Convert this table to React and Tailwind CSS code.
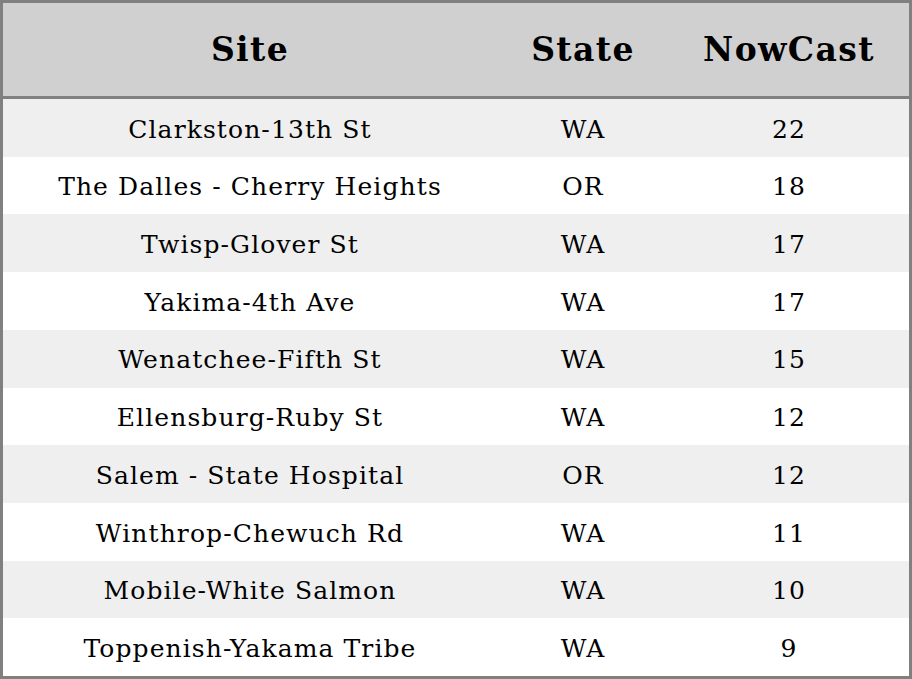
const rows = [
  ['Clarkston-13th St', 'WA', 22],
  ['The Dalles - Cherry Heights', 'OR', 18],
  ['Twisp-Glover St', 'WA', 17],
  ['Yakima-4th Ave', 'WA', 17],
  ['Wenatchee-Fifth St', 'WA', 15],
  ['Ellensburg-Ruby St', 'WA', 12],
  ['Salem - State Hospital', 'OR', 12],
  ['Winthrop-Chewuch Rd', 'WA', 11],
  ['Mobile-White Salmon', 'WA', 10],
  ['Toppenish-Yakama Tribe', 'WA', 9],
];

export default function App() {
  return (
    <div className="w-[912px] h-[679px] border-[3px] border-[#808080] bg-white text-black font-['DejaVu_Serif',serif] flex flex-col">
      <div className="h-[96px] shrink-0 bg-[#d0d0d0] border-b-[3px] border-[#808080] flex items-center text-[33px] tracking-[1.4px] font-bold">
        <div className="w-[494px] text-center">Site</div>
        <div className="w-[172px] text-center">State</div>
        <div className="flex-1 text-center">NowCast</div>
      </div>
      <div className="flex-1 flex flex-col">
        {rows.map(([site, state, val], i) => (
          <div
            key={site}
            className={`flex-1 flex items-center pt-[3px] text-[25px] tracking-[1.1px] ${i % 2 === 0 ? 'bg-[#efefef]' : 'bg-white'}`}
          >
            <div className="w-[494px] text-center">{site}</div>
            <div className="w-[172px] text-center">{state}</div>
            <div className="flex-1 text-center">{val}</div>
          </div>
        ))}
      </div>
    </div>
  );
}
